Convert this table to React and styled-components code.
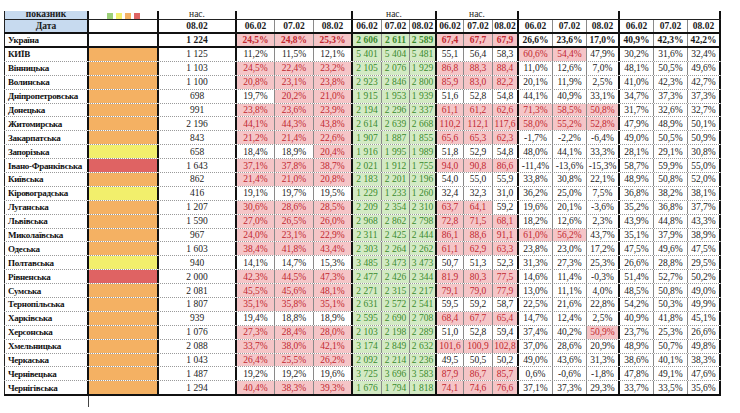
import React from 'react';
import styled, { createGlobalStyle } from 'styled-components';

const COLS = '85px 70px 78px 38px 39px 39px 29px 28px 27px 27px 29px 26px 34px 34px 33px 34px 34px 33px';
const THICK = [0, 1, 2, 5, 8, 11, 14, 17];

const fills = {
  pink: '#f5c5c7',
  green: '#d3eac4',
  blue: '#c7daef',
  orange: '#f4b163',
  yellow: '#f2ef6c',
  red: '#df6363',
};
const inks = {
  pink: '#c1272f',
  green: '#3b8a2e',
};

const GlobalStyle = createGlobalStyle`
  html, body { margin: 0; padding: 0; background: #fff; }
  body { font-family: "Liberation Serif", "Times New Roman", serif; }
`;

const Page = styled.div`
  width: 740px;
  height: 413px;
  overflow: hidden;
  background: #fff;
  padding: 11px 0 0 4px;
  box-sizing: border-box;
`;

const Sheet = styled.div`
  width: 717px;
`;

const Row = styled.div`
  display: grid;
  grid-template-columns: ${COLS};
  height: ${p => p.$h}px;
  box-sizing: border-box;
  border-top: ${p => (p.$top ? '1px solid #222' : 'none')};
  border-bottom: ${p =>
    p.$rule === 'thick' ? '2px solid #111' : p.$rule === 'none' ? 'none' : '1px dotted #9a9a9a'};
`;

const Cell = styled.div`
  display: flex;
  align-items: ${p => (p.$bottom ? 'flex-end' : 'center')};
  justify-content: ${p => (p.$left ? 'flex-start' : 'center')};
  padding-left: ${p => (p.$left ? '3px' : '0')};
  grid-column: ${p => (p.$span ? `span ${p.$span}` : 'auto')};
  border-left: ${p => (p.$first ? '1px solid #222' : 'none')};
  border-right: ${p => (p.$thick ? '2px solid #111' : '1px solid #8a8a8a')};
  background: ${p => fills[p.$tone] || 'transparent'};
  color: ${p => inks[p.$tone] || '#1b1b1b'};
  font-size: 9.5px;
  line-height: 10px;
  font-weight: ${p => (p.$bold ? 700 : 400)};
  white-space: nowrap;
  overflow: ${p => (p.$open ? 'visible' : 'hidden')};
  box-sizing: border-box;
  min-width: 0;
`;

const NameCell = styled(Cell)`
  font-size: 9px;
  letter-spacing: -0.3px;
  color: #111;
`;

const TopLabel = styled.span`
  display: block;
  line-height: 7px;
  margin-bottom: 1px;
`;

const Legend = styled.div`
  display: flex;
  align-items: flex-end;
  gap: 3px;
  height: 100%;
`;

const Swatch = styled.span`
  display: block;
  width: 6px;
  height: 6.5px;
  background: ${p => p.$c};
`;

const Stub = styled.div`
  width: 85px;
  height: 11px;
  box-sizing: border-box;
  border-right: 1px solid #444;
`;

const ukraine = ['Україна', '', '1 224', '*24,5%', '*24,8%', '*25,3%', '2 606', '2 611', '2 589',
  '*67,4', '*67,7', '*67,9', '26,6%', '23,6%', '17,0%', '40,9%', '42,3%', '42,2%'];

const rows = [
  ['КИЇВ', 'orange', '1 125', '11,2%', '11,5%', '12,1%', '5 401', '5 404', '5 481', '55,1', '56,4', '58,3', '*60,6%', '*54,4%', '47,9%', '30,2%', '31,6%', '32,4%'],
  ['Вінницька', 'orange', '1 103', '*24,5%', '*22,4%', '*23,2%', '2 105', '2 076', '1 929', '*86,8', '*88,3', '*88,4', '11,0%', '12,6%', '7,0%', '48,1%', '50,5%', '49,6%'],
  ['Волинська', 'orange', '1 100', '*20,8%', '*23,1%', '*23,8%', '2 923', '2 846', '2 800', '*85,9', '*83,0', '*82,2', '20,1%', '11,9%', '2,5%', '41,0%', '42,3%', '42,7%'],
  ['Дніпропетровська', 'orange', '698', '19,7%', '*20,2%', '*21,0%', '1 915', '1 953', '1 939', '51,6', '52,8', '54,8', '44,1%', '40,9%', '33,1%', '34,7%', '37,3%', '37,3%'],
  ['Донецька', 'orange', '991', '*23,8%', '*23,6%', '*23,9%', '2 194', '2 296', '2 337', '*61,1', '*61,2', '*62,6', '*71,3%', '*58,5%', '*50,8%', '31,7%', '32,6%', '32,7%'],
  ['Житомирська', 'orange', '2 196', '*44,1%', '*44,3%', '*43,8%', '2 614', '2 639', '2 668', '*110,2', '*112,1', '*117,6', '*58,0%', '*55,2%', '*52,8%', '47,9%', '48,9%', '50,1%'],
  ['Закарпатська', 'orange', '843', '*21,2%', '*21,4%', '*22,6%', '1 907', '1 887', '1 855', '*65,6', '*65,3', '*62,3', '-1,7%', '-2,2%', '-6,4%', '49,0%', '50,5%', '50,9%'],
  ['Запорізька', 'yellow', '658', '18,4%', '18,9%', '*20,4%', '1 916', '1 995', '1 989', '51,8', '52,9', '54,8', '48,0%', '44,1%', '33,3%', '28,1%', '29,1%', '30,8%'],
  ['Івано-Франківська', 'red', '1 643', '*37,1%', '*37,8%', '*38,7%', '2 021', '1 912', '1 755', '*94,0', '*90,8', '*86,6', '-11,4%', '-13,6%', '-15,3%', '58,7%', '59,9%', '55,0%'],
  ['Київська', 'orange', '862', '*21,4%', '*21,0%', '*20,8%', '2 183', '2 201', '2 196', '54,0', '55,0', '55,9', '33,8%', '30,8%', '22,1%', '48,9%', '50,8%', '52,0%'],
  ['Кіровоградська', 'yellow', '416', '19,1%', '19,7%', '19,5%', '1 229', '1 233', '1 260', '32,4', '32,3', '31,0', '36,2%', '25,0%', '7,5%', '36,8%', '38,2%', '38,1%'],
  ['Луганська', 'orange', '1 207', '*30,6%', '*28,6%', '*28,5%', '2 209', '2 354', '2 310', '*63,7', '*64,1', '59,2', '19,6%', '20,1%', '-3,6%', '35,2%', '36,8%', '37,7%'],
  ['Львівська', 'orange', '1 590', '*27,0%', '*26,5%', '*26,0%', '2 968', '2 862', '2 798', '*72,8', '*71,5', '*68,1', '18,2%', '12,6%', '2,3%', '43,9%', '44,8%', '43,3%'],
  ['Миколаївська', 'orange', '967', '*24,0%', '*23,1%', '*22,9%', '2 311', '2 425', '2 444', '*86,1', '*88,6', '*91,1', '*61,0%', '*56,2%', '43,7%', '35,1%', '37,9%', '38,9%'],
  ['Одеська', 'orange', '1 603', '*38,4%', '*41,8%', '*43,4%', '2 303', '2 264', '2 262', '*61,1', '*62,9', '*63,3', '23,8%', '23,0%', '17,2%', '47,5%', '49,6%', '47,5%'],
  ['Полтавська', 'yellow', '940', '14,1%', '14,7%', '15,3%', '3 485', '3 473', '3 473', '50,7', '51,3', '52,3', '31,3%', '27,3%', '25,3%', '26,6%', '28,8%', '29,5%'],
  ['Рівненська', 'red', '2 000', '*42,3%', '*44,5%', '*47,3%', '2 477', '2 426', '2 344', '*81,9', '*80,3', '*77,5', '14,6%', '11,4%', '-0,3%', '51,4%', '52,7%', '50,2%'],
  ['Сумська', 'orange', '2 081', '*45,5%', '*45,6%', '*48,1%', '2 271', '2 315', '2 217', '*79,1', '*79,0', '*77,9', '13,0%', '11,1%', '4,0%', '48,5%', '50,8%', '49,0%'],
  ['Тернопільська', 'orange', '1 807', '*35,1%', '*35,8%', '*35,1%', '2 631', '2 572', '2 541', '59,5', '59,2', '58,7', '22,5%', '21,6%', '22,8%', '54,2%', '50,3%', '49,9%'],
  ['Харківська', 'orange', '939', '19,4%', '18,8%', '18,9%', '2 595', '2 690', '2 708', '*68,4', '*67,7', '*65,4', '14,7%', '12,4%', '2,5%', '40,9%', '41,8%', '45,1%'],
  ['Херсонська', 'orange', '1 076', '*27,3%', '*28,4%', '*28,0%', '2 103', '2 198', '2 289', '51,0', '52,8', '59,4', '37,4%', '40,2%', '*50,9%', '23,7%', '25,3%', '26,6%'],
  ['Хмельницька', 'orange', '2 088', '*33,7%', '*38,0%', '*42,1%', '3 174', '2 849', '2 632', '*101,6', '*100,9', '*102,8', '37,0%', '28,6%', '20,9%', '48,9%', '50,7%', '49,8%'],
  ['Черкаська', 'orange', '1 043', '*26,4%', '*25,5%', '*26,2%', '2 092', '2 214', '2 236', '49,5', '50,5', '50,2', '49,0%', '43,6%', '31,3%', '38,6%', '40,1%', '38,3%'],
  ['Чернівецька', 'orange', '1 487', '19,2%', '19,2%', '19,6%', '3 725', '3 696', '3 583', '*87,9', '*86,7', '*85,7', '0,6%', '-0,6%', '-1,8%', '47,8%', '49,1%', '47,6%'],
  ['Чернігівська', 'orange', '1 294', '*40,4%', '*38,3%', '*39,3%', '1 676', '1 794', '1 818', '*74,1', '*74,6', '*76,6', '37,1%', '37,3%', '29,3%', '33,7%', '33,5%', '35,6%'],
];

const dates = ['06.02', '07.02', '08.02'];

const DataRow = ({ values, bold, h, rule }) => (
  <Row $h={h} $rule={rule}>
    {values.map((raw, i) => {
      if (i === 0) {
        return <NameCell key={i} $first $left $bold $thick>{raw}</NameCell>;
      }
      if (i === 1) {
        return <Cell key={i} $thick $tone={raw || undefined} />;
      }
      const hot = raw.startsWith('*');
      const text = hot ? raw.slice(1) : raw;
      const tone = i >= 6 && i <= 8 ? 'green' : hot ? 'pink' : undefined;
      return (
        <Cell key={i} $thick={THICK.includes(i)} $tone={tone} $bold={bold}>
          {text}
        </Cell>
      );
    })}
  </Row>
);

export default function App() {
  return (
    <Page>
      <GlobalStyle />
      <Sheet>
        <Row $h={8} $rule="none">
          <Cell $first $thick $bottom $bold $open $tone="blue"><TopLabel>показник</TopLabel></Cell>
          <Cell $thick $bottom>
            <Legend>
              <Swatch $c="#9bcf78" />
              <Swatch $c="#f2ef6c" />
              <Swatch $c="#f4b163" />
              <Swatch $c="#df6363" />
            </Legend>
          </Cell>
          <Cell $thick $bottom $open><TopLabel>нас.</TopLabel></Cell>
          <Cell $thick $span={3} />
          <Cell $thick $bottom $open $span={3}><TopLabel>нас.</TopLabel></Cell>
          <Cell $thick $bottom $open $span={3}><TopLabel>нас.</TopLabel></Cell>
          <Cell $thick $span={3} />
          <Cell $thick $span={3} />
        </Row>
        <Row $h={15} $top $rule="thick">
          <Cell $first $thick $bold $tone="blue">Дата</Cell>
          <Cell $thick />
          <Cell $thick $bold>08.02</Cell>
          {[0, 1, 2, 3, 4].map(g =>
            dates.map((d, j) => (
              <Cell key={`${g}-${j}`} $thick={j === 2} $bold>{d}</Cell>
            ))
          )}
        </Row>
        <DataRow values={ukraine} bold h={14} rule="thick" />
        {rows.map((r, i) => (
          <DataRow
            key={r[0]}
            values={r}
            h={i === rows.length - 1 ? 14.4 : 13.9}
            rule={i === rows.length - 1 ? 'thick' : 'dotted'}
          />
        ))}
        <Stub />
      </Sheet>
    </Page>
  );
}
